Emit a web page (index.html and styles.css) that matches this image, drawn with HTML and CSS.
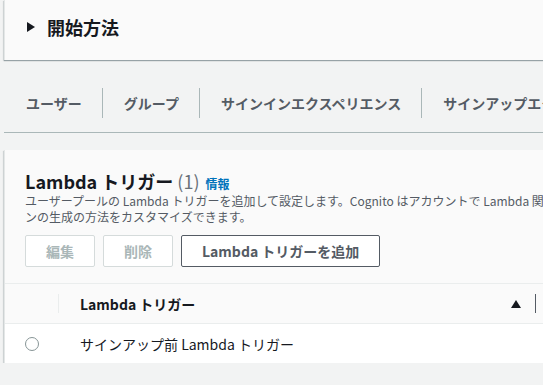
FILE: index.html
```html
<!DOCTYPE html>
<html lang="ja">
<head>
    <meta charset="UTF-8">
    <meta name="viewport" content="width=device-width, initial-scale=1.0">
    <title>ユーザープール - Lambda トリガー</title>
    <link rel="stylesheet" href="styles.css">
</head>
<body>
    <div class="page">
        <!-- Getting started (collapsed) -->
        <div class="card intro">
            <svg class="caret" width="8" height="10" viewBox="0 0 8 10"><polygon points="0,0 8,5 0,10" fill="#16191f"/></svg>
            <h2>開始方法</h2>
        </div>

        <!-- Tabs -->
        <div class="tabs">
            <span class="tab">ユーザー</span>
            <span class="tab">グループ</span>
            <span class="tab">サインインエクスペリエンス</span>
            <span class="tab">サインアップエクスペリエンス</span>
        </div>

        <!-- Lambda triggers -->
        <div class="card triggers">
            <div class="card-head">
                <h2 class="title">
                    <span>Lambda トリガー</span>
                    <span class="count">(1)</span>
                    <a class="info" href="#">情報</a>
                </h2>
                <p class="desc">ユーザープールの Lambda トリガーを追加して設定します。Cognito はアカウントで Lambda 関数を呼び出して、認証、メッセージ、トーク<br>ンの生成の方法をカスタマイズできます。</p>
                <div class="actions">
                    <button class="btn" disabled>編集</button>
                    <button class="btn" disabled>削除</button>
                    <button class="btn btn-normal">Lambda トリガーを追加</button>
                </div>
            </div>

            <div class="table">
                <div class="row head">
                    <div class="cell select"></div>
                    <span class="col-sep"></span>
                    <div class="cell name">Lambda トリガー</div>
                    <span class="sort"></span>
                    <span class="col-sep dark"></span>
                </div>
                <div class="row">
                    <div class="cell select"><span class="radio"></span></div>
                    <div class="cell name">サインアップ前 Lambda トリガー</div>
                </div>
            </div>
        </div>
    </div>
</body>
</html>
```

FILE: styles.css
```css
/* General */
body {
    margin: 0;
    background-color: #f2f3f3;
    font-family: "Noto Sans CJK JP", "Noto Sans", sans-serif;
    color: #16191f;
    overflow: hidden;
}

.page {
    width: 640px;
    padding-left: 4px;
}

h2 {
    margin: 0;
}

/* Cards */
.card {
    background-color: #fafafa;
    border-left: 1px solid #e4e7e7;
    box-shadow: 0 1px 1px 0 rgba(0, 28, 36, 0.3), -1px 1px 1px 0 rgba(0, 28, 36, 0.1);
}

.intro {
    display: flex;
    align-items: center;
    height: 60px;
    padding: 0 0 6px 22px;
    box-sizing: border-box;
}

.caret {
    flex: none;
    margin-right: 12px;
}

.intro h2 {
    font-size: 18px;
    line-height: 24px;
    font-weight: bold;
}

/* Tabs */
.tabs {
    display: flex;
    margin-top: 28px;
    padding: 0 0 14px 1px;
    border-bottom: 1px solid #aab7b8;
    white-space: nowrap;
}

.tab {
    padding: 0 20px 0 21px;
    line-height: 30px;
    font-size: 14px;
    font-weight: bold;
    color: #545b64;
    border-left: 1px solid #aab7b8;
}

.tab:first-child {
    border-left: none;
}

/* Lambda triggers */
.triggers {
    margin-top: 17px;
}

.card-head {
    padding: 20px 0 16px 20px;
}

.title {
    display: flex;
    align-items: baseline;
    gap: 4px;
    height: 22px;
    margin-bottom: 1px;
    font-size: 18px;
    line-height: 22px;
    font-weight: bold;
}

.count {
    font-weight: normal;
    color: #687078;
}

.info {
    font-size: 12px;
    font-weight: bold;
    color: #0073bb;
    text-decoration: none;
    margin-left: 2px;
}

.desc {
    margin: 0;
    font-size: 12px;
    line-height: 16px;
    color: #545b64;
    white-space: nowrap;
}

.actions {
    display: flex;
    gap: 8px;
    margin-top: 10px;
}

.btn {
    height: 32px;
    padding: 0 20px;
    font-family: inherit;
    font-size: 14px;
    font-weight: bold;
    background-color: #fff;
    border: 1px solid #d5dbdb;
    border-radius: 2px;
    color: #aab7b8;
}

.btn-normal {
    border-color: #545b64;
    color: #545b64;
    cursor: pointer;
}

/* Table */
.row {
    display: flex;
    align-items: center;
    height: 39px;
    border-top: 1px solid #eaeded;
    background-color: #fff;
    font-size: 14px;
}

.row.head {
    background-color: #fafafa;
    font-weight: bold;
}

.cell.select {
    flex: none;
    width: 53px;
    display: flex;
    align-items: center;
    padding-left: 20px;
    box-sizing: border-box;
}

.col-sep {
    flex: none;
    width: 1px;
    height: 19px;
    background-color: #eaeded;
}

.col-sep.dark {
    background-color: #545b64;
    margin-left: 14px;
}

.cell.name {
    padding-left: 22px;
}

.head .cell.name {
    flex: none;
    width: 452px;
    padding-left: 21px;
    box-sizing: border-box;
}

.sort {
    flex: none;
    width: 0;
    height: 0;
    border-bottom: 8px solid #16191f;
    border-left: 5px solid transparent;
    border-right: 5px solid transparent;
}

.radio {
    width: 12px;
    height: 12px;
    border: 1px solid #879596;
    border-radius: 50%;
}
```
